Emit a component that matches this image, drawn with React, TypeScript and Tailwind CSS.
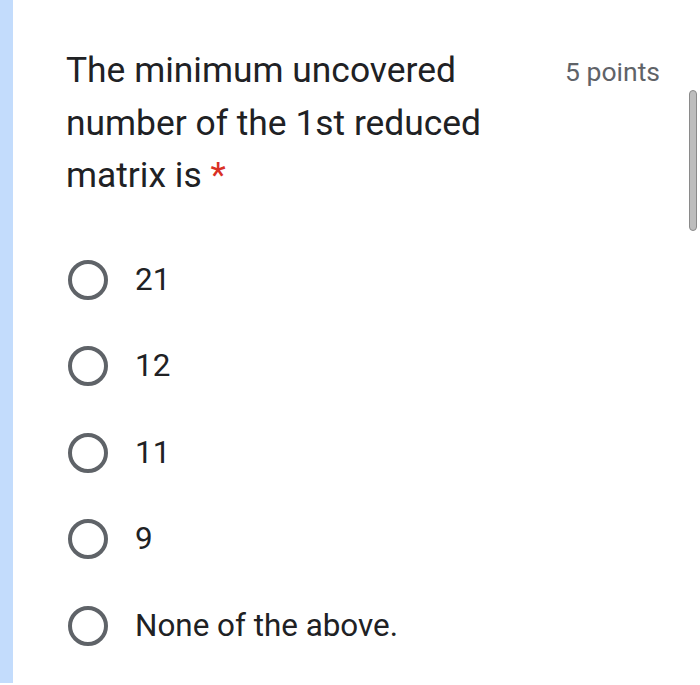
import React from 'react'

const options = ['21', '12', '11', '9', 'None of the above.']

function Radio() {
    return (
        <span className='block w-[40px] h-[40px] rounded-full border-[4.5px] border-[#5f6368] shrink-0' />
    )
}

export default function App() {
    return (
        <div className='relative flex w-[700px] h-[685px] bg-white overflow-hidden' style={{ fontFamily: 'Roboto, "Noto Sans", sans-serif' }}>
            <div className='w-[13px] h-[683px] bg-[#c3dcfc] shrink-0' />
            <div className='flex-1 h-[683px] rounded-tl-[10px] bg-white pl-[53px] pr-[40px] pt-[44px]'>
                <div className='flex justify-between items-start'>
                    <h1 className='text-[35.4px] leading-[52.5px] text-[#202124] w-[440px]'>
                        The minimum uncovered number of the 1st reduced matrix is
                        <span className='text-[#d93025]'> *</span>
                    </h1>
                    <span className='text-[26.5px] leading-[52px] mt-[2px] text-[#5f6368]'>5 points</span>
                </div>
                <div className='flex flex-col mt-[58px] ml-[2px] gap-[46.5px]'>
                    {options.map((o) => (
                        <div key={o} className='flex items-center gap-[27px]'>
                            <Radio />
                            <span className='text-[31.4px] leading-[40px] text-[#202124]'>{o}</span>
                        </div>
                    ))}
                </div>
            </div>
            <div className='absolute left-[689px] top-[90px] w-[8px] h-[141px] rounded-full bg-[#bdbdbd] border border-[#8a8a8a]' />
        </div>
    )
}
